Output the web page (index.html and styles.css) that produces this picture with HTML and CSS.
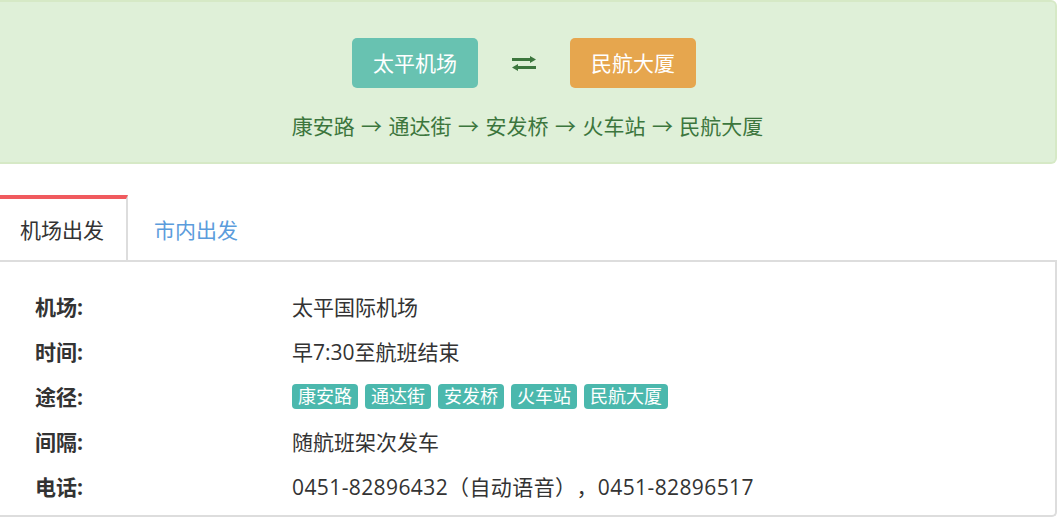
FILE: index.html
```html
<!DOCTYPE html>
<html lang="zh-CN">
<head>
<meta charset="utf-8">
<title>机场大巴</title>
<link rel="stylesheet" href="styles.css">
</head>
<body>
<section class="banner">
  <div class="stops">
    <span class="stop stop-from">太平机场</span>
    <svg class="swap" width="24" height="15" viewBox="0 0 24 15" aria-hidden="true">
      <rect x="0" y="2" width="19" height="3" fill="#3c763d"/>
      <polygon points="18,0 24,3.5 18,7" fill="#3c763d"/>
      <rect x="5" y="10" width="19" height="3" fill="#3c763d"/>
      <polygon points="6,8 0,11.5 6,15" fill="#3c763d"/>
    </svg>
    <span class="stop stop-to">民航大厦</span>
  </div>
  <p class="route">康安路 <span class="sep">→</span> 通达街 <span class="sep">→</span> 安发桥 <span class="sep">→</span> 火车站 <span class="sep">→</span> 民航大厦</p>
</section>

<nav class="tabs">
  <a class="tab tab-active">机场出发</a>
  <a class="tab tab-link">市内出发</a>
</nav>

<section class="panel">
  <dl class="info">
    <dt>机场:</dt><dd>太平国际机场</dd>
    <dt>时间:</dt><dd>早7:30至航班结束</dd>
    <dt>途径:</dt>
    <dd class="tags">
      <span class="tag">康安路</span><span class="tag">通达街</span><span class="tag">安发桥</span><span class="tag">火车站</span><span class="tag">民航大厦</span>
    </dd>
    <dt>间隔:</dt><dd>随航班架次发车</dd>
    <dt>电话:</dt><dd class="phone">0451-82896432（自动语音），0451-82896517</dd>
  </dl>
</section>
</body>
</html>
```

FILE: styles.css
```css
* { box-sizing: border-box; }

body {
  margin: 0;
  background: #fff;
  font-family: "Open Sans", "Noto Sans CJK SC", sans-serif;
  font-size: 21px;
  color: #333;
}

.banner {
  height: 164px;
  background: #dff0d8;
  border: 2px solid #d6e9c6;
  border-left: 0;
  border-radius: 0 6px 6px 0;
  padding-top: 36px;
  text-align: center;
}

.stops {
  display: flex;
  justify-content: center;
  align-items: center;
  gap: 34px;
  padding-right: 7px;
}

.stop {
  display: block;
  width: 126px;
  height: 50px;
  line-height: 50px;
  border-radius: 5px;
  color: #fff;
  font-size: 21px;
}

.stop-from { background: #68c2b1; }
.stop-to { background: #e6a64e; }

.swap { display: block; }

.route {
  margin: 23px 0 0;
  line-height: 30px;
  color: #3c763d;
}

.sep {
  margin: 0 1px;
}

.tabs {
  display: flex;
  margin-top: 31px;
  height: 67px;
  border-bottom: 2px solid #ddd;
}

.tab {
  display: block;
  line-height: 62px;
  text-decoration: none;
}

.tab-active {
  width: 128px;
  padding-left: 20px;
  border-top: 4px solid #f05a5e;
  border-right: 2px solid #ddd;
  color: #333;
}

.tab-link {
  padding: 4px 26px 0;
  color: #5b9cdc;
}

.panel {
  border-right: 2px solid #ddd;
  border-bottom: 2px solid #ddd;
  border-radius: 0 0 5px 0;
  padding: 21px 0 7px 35px;
}

.info {
  display: grid;
  grid-template-columns: 257px 1fr;
  grid-auto-rows: 45px;
  align-items: center;
  margin: 0;
}

.info dt {
  font-weight: bold;
}

.info dd {
  margin: 0;
}

.phone {
  text-spacing-trim: space-all;
  letter-spacing: 0.4px;
}

.tags {
  display: flex;
  gap: 7px;
}

.tag {
  display: block;
  height: 25px;
  line-height: 25px;
  padding: 0 6px;
  margin-top: 2px;
  border-radius: 4px;
  background: #4bb8ad;
  color: #fff;
  font-size: 18px;
}
```
